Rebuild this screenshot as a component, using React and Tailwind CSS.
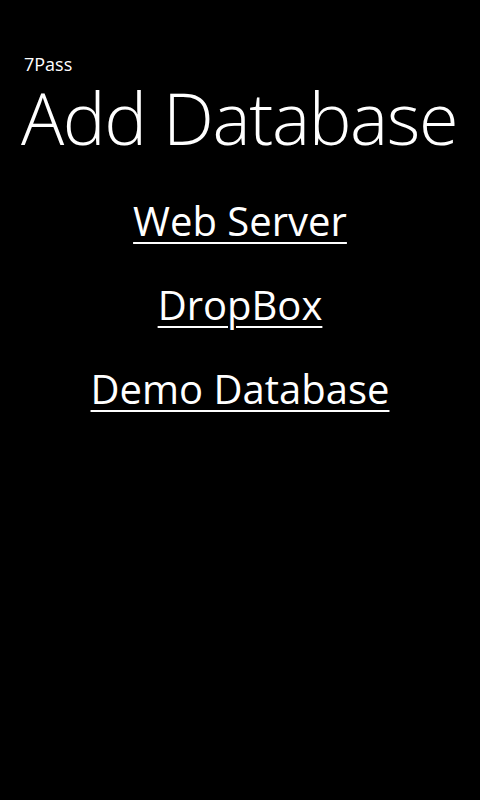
export default function App() {
  const f = { fontFamily: '"Open Sans", "Noto Sans", sans-serif' };
  return (
    <div className="w-[480px] h-[800px] bg-black text-white overflow-hidden" style={f}>
      <div className="pl-[24px] pt-[53px] text-[18px] leading-[22px]">7Pass</div>
      <div className="pl-[21px] mt-[6px] text-[72px] leading-[72px] font-light tracking-[-1.4px]">Add Database</div>
      <div className="flex flex-col items-center mt-[40px] gap-[28px]">
        {["Web Server", "DropBox", "Demo Database"].map((t) => (
          <a key={t} className="text-[40px] leading-[56px] underline underline-offset-[6px] decoration-[2px]">{t}</a>
        ))}
      </div>
    </div>
  );
}
